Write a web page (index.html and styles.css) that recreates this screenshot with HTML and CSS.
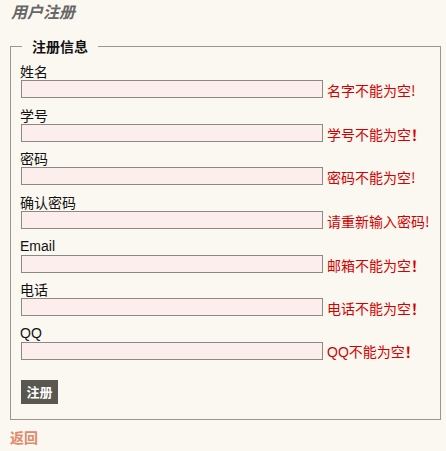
FILE: index.html
```html
<!DOCTYPE html>
<html lang="zh">
<head>
<meta charset="utf-8">
<title>用户注册</title>
<link rel="stylesheet" href="styles.css">
</head>
<body>
<h2 class="title">用户注册</h2>
<form class="reg-form">
  <fieldset class="reg">
    <legend class="reg-legend">注册信息</legend>
    <div class="row">
      <label class="label">姓名</label>
      <div class="field"><input class="input" type="text"><span class="err">名字不能为空!</span></div>
    </div>
    <div class="row">
      <label class="label">学号</label>
      <div class="field"><input class="input" type="text"><span class="err">学号不能为空<b class="bang">！</b></span></div>
    </div>
    <div class="row">
      <label class="label">密码</label>
      <div class="field"><input class="input" type="password"><span class="err">密码不能为空!</span></div>
    </div>
    <div class="row">
      <label class="label">确认密码</label>
      <div class="field"><input class="input" type="password"><span class="err">请重新输入密码!</span></div>
    </div>
    <div class="row">
      <label class="label latin">Email</label>
      <div class="field"><input class="input" type="text"><span class="err">邮箱不能为空<b class="bang">！</b></span></div>
    </div>
    <div class="row">
      <label class="label">电话</label>
      <div class="field"><input class="input" type="text"><span class="err">电话不能为空<b class="bang">！</b></span></div>
    </div>
    <div class="row">
      <label class="label latin">QQ</label>
      <div class="field"><input class="input" type="text"><span class="err"><span class="latin">QQ</span>不能为空<b class="bang">！</b></span></div>
    </div>
    <div class="actions">
      <button class="btn" type="button">注册</button>
    </div>
  </fieldset>
</form>
<a class="back" href="#">返回</a>
</body>
</html>
```

FILE: styles.css
```css
html, body {
  margin: 0;
  padding: 0;
}
body {
  background: #fbf8f1;
  padding: 0 0 0 10px;
  font-family: "Noto Sans CJK SC", "Liberation Sans", sans-serif;
  font-size: 14px;
  color: #111;
}
.title {
  margin: 0;
  padding: 1px 0 0 1px;
  font-size: 16px;
  line-height: 20px;
  font-style: italic;
  font-weight: bold;
  color: #666;
}
.reg-form {
  margin: 16px 0 0 0;
}
.reg {
  box-sizing: border-box;
  width: 430px;
  margin: 0;
  border: 1px solid #9a958e;
  padding: 7px 10px 15px 10px;
  display: flex;
  flex-direction: column;
}
.reg-legend {
  padding: 0 10px;
  margin-left: 1px;
  font-size: 14px;
  line-height: 18px;
  font-weight: bold;
  color: #111;
}
.row {
  display: flex;
  flex-direction: column;
  margin-bottom: 7.67px;
}
.label {
  display: block;
  line-height: 18px;
  height: 18px;
  margin-left: -1px;
}
.latin {
  font-family: "Liberation Sans", "Noto Sans CJK SC", sans-serif;
}
.field {
  display: flex;
  align-items: center;
  height: 18px;
}
.input {
  box-sizing: border-box;
  width: 302px;
  height: 18px;
  margin: 0;
  padding: 0 2px;
  border: 1px solid #8d8881;
  background: #fdeeee;
  outline: none;
}
.err {
  margin-left: 4px;
  margin-top: 2px;
  color: #d40000;
  font-size: 14px;
  line-height: 18px;
  white-space: nowrap;
}
.bang {
  font-weight: bold;
  margin-right: -6px;
}
.actions {
  margin-top: 12px;
  display: flex;
}
.btn {
  height: 24px;
  padding: 0 5.5px;
  margin: 0;
  border: none;
  background: #5a5650;
  color: #fff;
  font-family: "Noto Sans CJK SC", sans-serif;
  font-size: 13px;
  font-weight: bold;
  line-height: 24px;
}
.back {
  display: inline-block;
  margin-top: 8px;
  font-size: 14px;
  line-height: 18px;
  font-weight: bold;
  color: #e3896a;
  text-decoration: none;
}
```
